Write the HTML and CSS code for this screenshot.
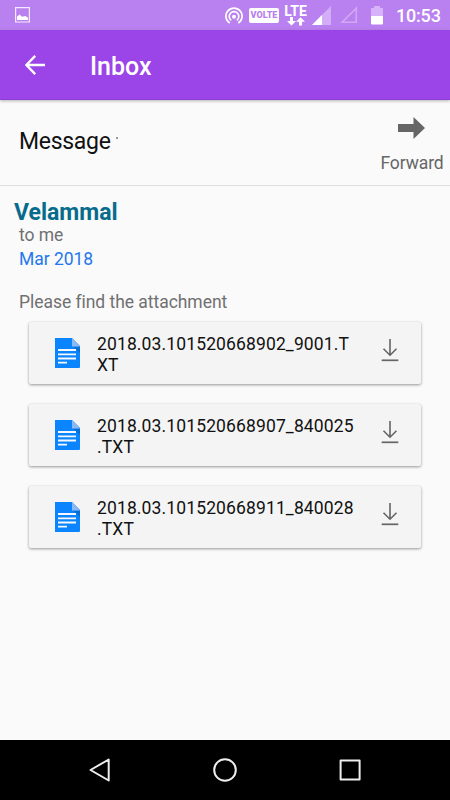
FILE: index.html
```html
<!DOCTYPE html>
<html lang="en">
<head>
<meta charset="utf-8">
<meta name="viewport" content="width=device-width">
<title>Inbox</title>
<link rel="stylesheet" href="styles.css">
</head>
<body>
<svg class="defs" width="0" height="0" aria-hidden="true">
  <symbol id="doc" viewBox="0 0 25 30">
    <path d="M0 0H17L25 8V29Q25 30 24 30H0Z" fill="#0a84ff"/>
    <path d="M18 8.5H25V15Z" fill="#0870d4"/>
    <path d="M17 0L25 8.5H17Z" fill="#8cb9f5"/>
    <path d="M3 12H21M3 16.3H21M3 20.5H21M3 24.6H12" stroke="#f4f8ff" stroke-width="1.8"/>
  </symbol>
  <symbol id="download" viewBox="0 0 18 24">
    <path d="M9 1V17M2.5 10.7L9 17.2L15.5 10.7" fill="none" stroke="#656565" stroke-width="1.6"/>
    <path d="M.7 22.3H17.3" stroke="#656565" stroke-width="1.7"/>
  </symbol>
</svg>
<div class="screen">
  <header class="status">
    <svg class="picture" width="15" height="16" viewBox="0 0 15 16"><path d="M.6.6H14.4V15H.6Z" fill="none" stroke="#f5e9ff" stroke-width="1.2"/><path d="M2 13V9.5L4.7 7.5L7 9.8L10.3 9L13 10.8V13Z" fill="#fff"/></svg>
    <svg class="hotspot" width="18" height="18" viewBox="0 0 18 18" fill="none" stroke="#fff" stroke-width="1.7"><path d="M4.7 16A8.1 8.1 0 1 1 13.3 16"/><path d="M6.2 13.4A4.8 4.8 0 1 1 11.8 13.4"/><circle cx="9" cy="9.7" r="2" fill="#fff" stroke="none"/></svg>
    <span class="volte">VOLTE</span>
    <span class="lte"><span>LTE</span>
      <svg width="18" height="9" viewBox="0 0 18 9" fill="#fff"><path d="M3 0H6V4H9L4.5 8.5L0 4H3ZM13.5 .3L18 4.7H15V8.5H12V4.7H9Z"/></svg>
    </span>
    <svg class="signal" width="19" height="19" viewBox="0 0 19 19"><path d="M19 0V19H0Z" fill="#d3aef7"/><path d="M10 9V19H0Z" fill="#fff"/></svg>
    <svg class="nosim" width="18" height="18" viewBox="0 0 18 18"><path d="M16.3 2.2V16.3H2.2Z" fill="none" stroke="#d3a7f6" stroke-width="1.6"/></svg>
    <svg class="battery" width="12" height="19" viewBox="0 0 12 19"><path d="M3 0H9V2H12V10H0V2H3Z" fill="#d7b2f8"/><path d="M0 10H12V17Q12 18.5 11 18.5H1Q0 18.5 0 17Z" fill="#fff"/></svg>
    <time>10:53</time>
  </header>
  <div class="toolbar">
    <svg width="20" height="20" viewBox="0 0 20 20"><path d="M20 10H2M10.2 .9L1.4 10L10.2 19.1" fill="none" stroke="#fff" stroke-width="2.3"/></svg>
    <h1>Inbox</h1>
  </div>
  <section class="subject">
    <h2>Message</h2><i class="dot"></i>
    <div class="forward">
      <svg width="27" height="22" viewBox="0 0 27 22"><path d="M0 7H15.5V0L27 11L15.5 22V15H0Z" fill="#666"/></svg>
      <span>Forward</span>
    </div>
  </section>
  <main>
    <div class="sender">Velammal</div>
    <div class="to">to me</div>
    <div class="date">Mar 2018</div>
    <p class="body">Please find the attachment</p>
    <div class="files">
      <div class="card"><svg class="doc"><use href="#doc"/></svg><span>2018.03.101520668902_9001.T<br>XT</span><svg class="download"><use href="#download"/></svg></div>
      <div class="card"><svg class="doc"><use href="#doc"/></svg><span>2018.03.101520668907_840025<br>.TXT</span><svg class="download"><use href="#download"/></svg></div>
      <div class="card"><svg class="doc"><use href="#doc"/></svg><span>2018.03.101520668911_840028<br>.TXT</span><svg class="download"><use href="#download"/></svg></div>
    </div>
  </main>
  <nav>
    <svg width="26" height="26" viewBox="0 0 26 26"><path d="M21.7 2.5V23.5L3.5 13Z"/></svg>
    <svg width="26" height="26" viewBox="0 0 26 26"><circle cx="13" cy="13" r="10.8"/></svg>
    <svg width="26" height="26" viewBox="0 0 26 26"><path d="M3.6 3.6H22.6V22.6H3.6Z"/></svg>
  </nav>
</div>
</body>
</html>
```
FILE: styles.css
```css
* { box-sizing: border-box; }
body { margin: 0; font-family: Roboto, "Liberation Sans", sans-serif; }
svg { display: block; flex: none; }
.defs { position: absolute; }
h1, h2, p { margin: 0; }
.screen { width: 450px; height: 800px; display: flex; flex-direction: column; background: #fafafa; overflow: hidden; }
.status { height: 30px; flex: none; display: flex; align-items: flex-start; background: #b980ef; color: #fff; }
.picture { margin: 7px 0 0 15px; }
.hotspot { margin: 7px 0 0 197px; margin-left: 195px; }
.volte { width: 30px; height: 15px; margin: 8px 0 0 6px; border-radius: 2px; background: #fff; color: #b980ef; font-size: 9px; line-height: 15px; font-weight: 900; text-align: center; }
.lte { width: 23px; margin: 6px 0 0 5px; display: flex; flex-direction: column; align-items: center; font-size: 14px; line-height: 11px; font-weight: 700; }
.signal { margin: 6px 0 0 5px; }
.nosim { margin: 6px 0 0 9px; }
.battery { margin: 6px 0 0 13px; }
time { margin: 5px 0 0 13px; font-size: 18px; line-height: 22px; font-weight: 500; letter-spacing: -.2px; white-space: nowrap; }
.toolbar { height: 70px; flex: none; display: flex; align-items: center; padding-left: 25px; background: #9b45e9; color: #fff; box-shadow: 0 1px 3px #7778; border-bottom: 1px solid #8d3fd5; z-index: 1; }
h1 { margin: 4px 0 0 45px; font-size: 25px; line-height: 30px; font-weight: 500; }
.subject { height: 86px; flex: none; display: flex; padding-left: 19px; border-bottom: 1px solid #dedede; }
h2 { margin-top: 28px; font-size: 23px; line-height: 28px; font-weight: 400; letter-spacing: -.3px; color: #111; }
.dot { width: 2px; height: 2px; margin: 37px 0 0 5px; background: #999; }
.forward { margin-left: auto; width: 76px; padding-top: 17px; display: flex; flex-direction: column; align-items: center; font-size: 17.5px; line-height: 22px; letter-spacing: -.1px; color: #666; gap: 13px; }
.forward svg { margin-right: 2px; }
main { flex: 1; padding-top: 14px; }
.sender { margin-left: 14px; font-size: 23px; line-height: 26px; font-weight: 700; color: #086b8c; }
.to, .date, .body { margin-left: 19px; font-size: 17.5px; line-height: 22px; letter-spacing: -.04px; color: #707070; }
.to { margin-top: -2px; }
.date { margin-top: 2px; color: #2378ed; }
.body { margin-top: 21px; }
.files { margin: 9px 29px 0; display: flex; flex-direction: column; gap: 20px; }
.card { height: 62px; display: flex; align-items: flex-start; background: #f4f4f4; border-radius: 2px; box-shadow: 0 1px 3px #0006; padding-left: 26px; }
.doc { width: 25px; height: 30px; margin-top: 16px; }
.card span { width: 284px; margin: 12px 0 0 17px; font-size: 17.5px; line-height: 20.5px; letter-spacing: .13px; color: #111; white-space: nowrap; }
.download { width: 18px; height: 24px; margin-top: 16px; }
nav { height: 60px; flex: none; display: flex; align-items: center; justify-content: space-between; padding: 0 87px; background: #000; }
nav svg { fill: none; stroke: #eee; stroke-width: 2; stroke-linejoin: round; }
```
